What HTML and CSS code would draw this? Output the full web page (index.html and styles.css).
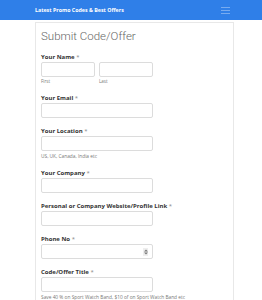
FILE: index.html
```html
<!DOCTYPE html>
<html lang="en">
<head>
    <meta charset="UTF-8">
    <meta name="viewport" content="width=device-width, initial-scale=1.0">
    <title>Submit Code/Offer</title>
    <link rel="stylesheet" href="styles.css">
</head>
<body>
    <div class="navbar">
        <a class="brand" href="#">Latest Promo Codes &amp; Best Offers</a>
        <div class="menu-toggle" title="Menu">
            <svg width="9" height="7" viewBox="0 0 9 7">
                <path d="M0 0.5h9M0 3.5h9M0 6.5h9" stroke="rgba(255,255,255,0.35)" stroke-width="1"/>
            </svg>
        </div>
    </div>

    <div class="page">
        <div class="card">
            <h2 class="page-title">Submit Code/Offer</h2>

            <div class="field">
                <label class="field-label">Your Name <span class="req">*</span></label>
                <div class="name-row">
                    <div class="name-part">
                        <input type="text" class="text-input">
                        <span class="sub-label">First</span>
                    </div>
                    <div class="name-part">
                        <input type="text" class="text-input">
                        <span class="sub-label">Last</span>
                    </div>
                </div>
            </div>

            <div class="field">
                <label class="field-label">Your Email <span class="req">*</span></label>
                <input type="text" class="text-input wide">
            </div>

            <div class="field">
                <label class="field-label">Your Location <span class="req">*</span></label>
                <input type="text" class="text-input wide">
                <div class="help">US, UK, Canada, India etc</div>
            </div>

            <div class="field">
                <label class="field-label">Your Company <span class="req">*</span></label>
                <input type="text" class="text-input wide">
            </div>

            <div class="field">
                <label class="field-label">Personal or Company Website/Profile Link <span class="req">*</span></label>
                <input type="text" class="text-input wide">
            </div>

            <div class="field">
                <label class="field-label">Phone No <span class="req">*</span></label>
                <div class="number-box">
                    <input type="text" class="bare-input">
                    <span class="spinner">
                        <svg width="4" height="6" viewBox="0 0 4 6">
                            <path d="M0 2.5L2 0.5L4 2.5zM0 3.5L2 5.5L4 3.5z" fill="#777"/>
                        </svg>
                    </span>
                </div>
            </div>

            <div class="field">
                <label class="field-label">Code/Offer Title <span class="req">*</span></label>
                <input type="text" class="text-input wide">
                <div class="help">Save 40 % on Sport Watch Band, $10 of on Sport Watch Band etc</div>
            </div>
        </div>
    </div>
</body>
</html>
```

FILE: styles.css
```css
body {
    margin: 0;
    padding: 0;
    font-family: "Open Sans", "Liberation Sans", sans-serif;
    background: #fff;
    color: #333;
}

.navbar {
    height: 20px;
    background: #2f7fe8;
    display: flex;
    align-items: center;
    justify-content: space-between;
    padding: 0 32px 0 35px;
}

.brand {
    color: white;
    font-size: 5.3px;
    font-weight: bold;
    text-decoration: none;
}

.menu-toggle {
    display: flex;
    align-items: center;
}

.page {
    padding: 2px 28px 0 35px;
}

.card {
    border: 1px solid #e8e8e8;
    border-bottom: none;
    padding: 4px 5px 0;
}

.page-title {
    margin: 0 0 8px;
    font-family: Roboto, "Open Sans", sans-serif;
    font-size: 11.5px;
    line-height: 18px;
    font-weight: 300;
    color: #666;
}

.field {
    margin-bottom: 9px;
}

.field-label {
    display: block;
    font-size: 6px;
    line-height: 8px;
    font-weight: bold;
    color: #333;
    margin-bottom: 1px;
}

.req {
    color: #888;
    font-weight: normal;
}

.name-row {
    display: flex;
    gap: 4px;
}

.name-part {
    width: 54px;
}

.text-input {
    display: block;
    width: 100%;
    height: 15px;
    padding: 0 3px;
    border: 1px solid #dcdcdc;
    border-radius: 2px;
    box-sizing: border-box;
    background: #fff;
}

.text-input.wide {
    width: 112px;
}

.sub-label {
    display: block;
    font-size: 4.5px;
    line-height: 8px;
    color: #777;
}

.help {
    font-size: 4.8px;
    line-height: 8px;
    color: #777;
    margin-top: 1px;
}

.number-box {
    width: 112px;
    height: 15px;
    display: flex;
    align-items: center;
    border: 1px solid #dcdcdc;
    border-radius: 2px;
    box-sizing: border-box;
    padding-right: 4px;
}

.bare-input {
    flex: 1;
    min-width: 0;
    height: 100%;
    border: none;
    padding: 0 3px;
    background: transparent;
}

.spinner {
    width: 5px;
    height: 8px;
    background: #eee;
    display: flex;
    align-items: center;
    justify-content: center;
}
```
